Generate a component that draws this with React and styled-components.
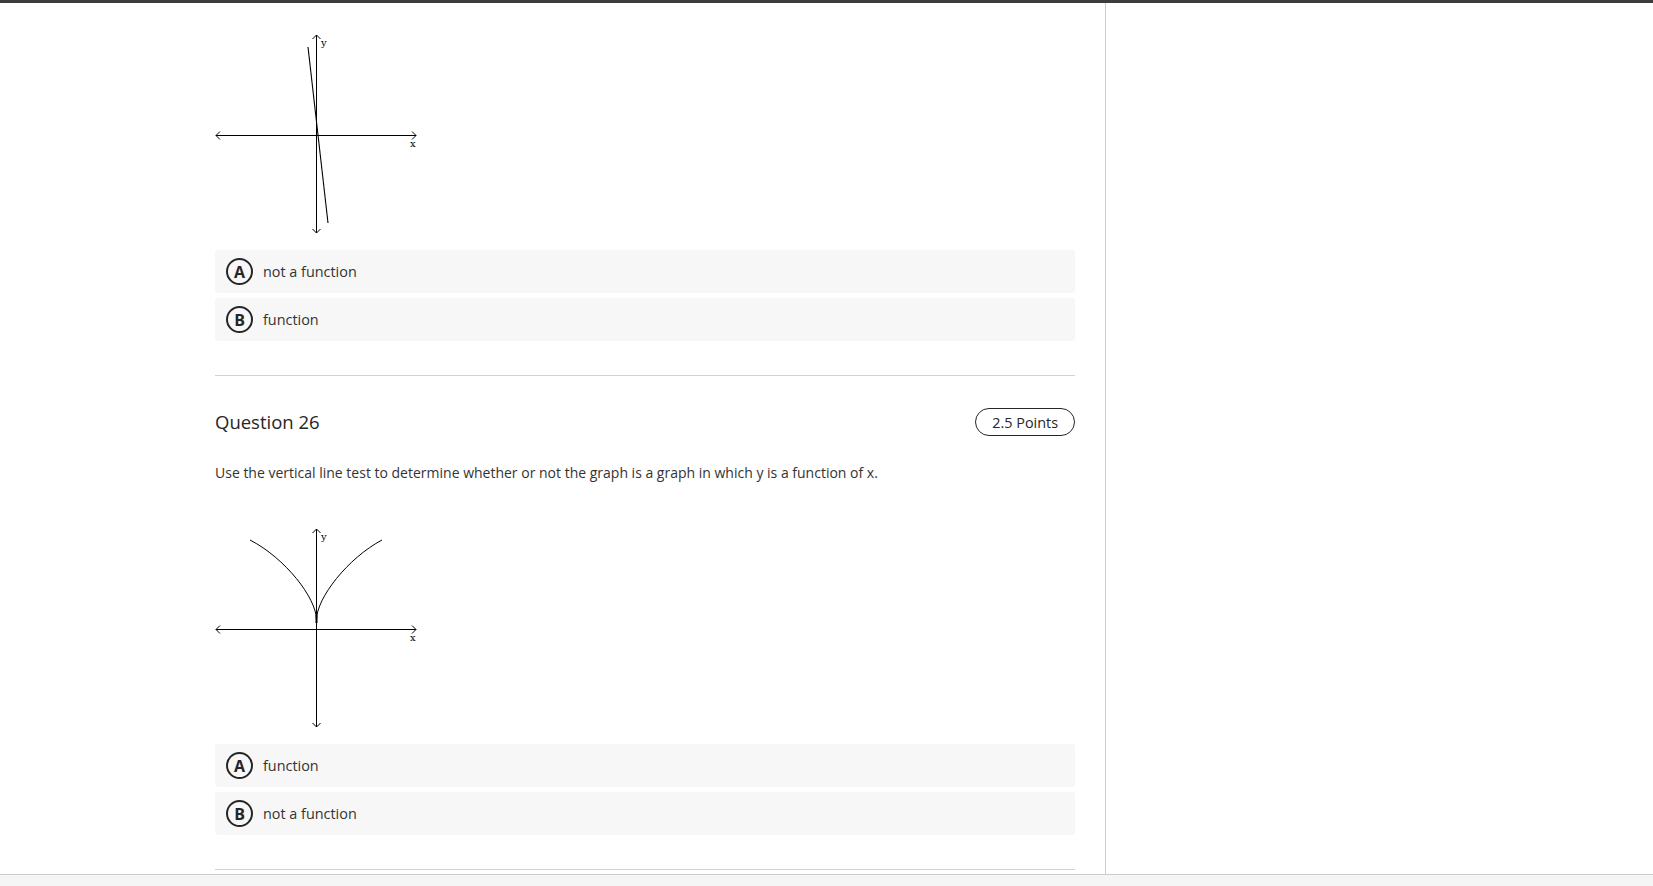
import styled, { createGlobalStyle } from "styled-components";

const GlobalStyle = createGlobalStyle`
  html, body {
    margin: 0;
    padding: 0;
    background: #ffffff;
    overflow: hidden;
  }
  body {
    font-family: "Open Sans", "Noto Sans", Arial, sans-serif;
    color: #333333;
  }
`;

const questions = [
  {
    id: 25,
    partial: true,
    graph: "line",
    options: [
      { key: "A", label: "not a function" },
      { key: "B", label: "function" },
    ],
  },
  {
    id: 26,
    points: "2.5 Points",
    text: "Use the vertical line test to determine whether or not the graph is a graph in which y is a function of x.",
    graph: "cusp",
    options: [
      { key: "A", label: "function" },
      { key: "B", label: "not a function" },
    ],
  },
];

const Axes = () => (
  <g stroke="#000" strokeWidth="1" fill="none">
    <line x1="1" y1="101.5" x2="201" y2="101.5" />
    <polyline points="5,97.5 1,101.5 5,105.5" />
    <polyline points="197,97.5 201,101.5 197,105.5" />
    <line x1="101.5" y1="1" x2="101.5" y2="199" />
    <polyline points="97.5,5 101.5,1 105.5,5" />
    <polyline points="97.5,195 101.5,199 105.5,195" />
  </g>
);

const Labels = () => (
  <g fontFamily="'DejaVu Serif', 'Liberation Serif', serif" fontSize="10" fill="#000">
    <text x="106" y="12">y</text>
    <text x="195" y="113">x</text>
  </g>
);

const Graph = ({ kind }) => (
  <GraphSvg width="210" height="202" viewBox="0 0 210 202">
    <Axes />
    <Labels />
    {kind === "line" ? (
      <line x1="93" y1="13" x2="113" y2="189" stroke="#000" strokeWidth="1.1" />
    ) : (
      <g stroke="#000" strokeWidth="1" fill="none">
        <path d="M101.5,92 C101.5,70 70,30 35,12" />
        <path d="M101.5,92 C101.5,70 133,30 167,12" />
        <rect x="100.5" y="87" width="2" height="8" fill="#000" stroke="none" />
      </g>
    )}
  </GraphSvg>
);

const Option = ({ letter, label }) => (
  <StyledOption>
    <StyledLetter>{letter}</StyledLetter>
    <StyledOptionLabel>{label}</StyledOptionLabel>
  </StyledOption>
);

const Question = ({ q }) => (
  <StyledQuestion $partial={q.partial}>
    {!q.partial && (
      <>
        <StyledHeader>
          <StyledTitle>Question {q.id}</StyledTitle>
          <StyledPoints>{q.points}</StyledPoints>
        </StyledHeader>
        <StyledText>{q.text}</StyledText>
      </>
    )}
    <Graph kind={q.graph} />
    <StyledOptions>
      {q.options.map(({ key, label }) => (
        <Option key={key} letter={key} label={label} />
      ))}
    </StyledOptions>
  </StyledQuestion>
);

export default function App() {
  return (
    <>
      <GlobalStyle />
      <StyledPage>
        <StyledTopBar />
        <StyledMain>
          <StyledLeft>
            <StyledContent>
              {questions.map((q) => (
                <Question key={q.id} q={q} />
              ))}
            </StyledContent>
          </StyledLeft>
          <StyledRight />
        </StyledMain>
        <StyledBottomBar />
      </StyledPage>
    </>
  );
}

const StyledPage = styled.div`
  width: 100vw;
  height: 886px;
  display: flex;
  flex-direction: column;
`;

const StyledTopBar = styled.div`
  height: 3px;
  flex-shrink: 0;
  background: #3b3c3e;
`;

const StyledMain = styled.div`
  flex: 1;
  display: flex;
  min-height: 0;
`;

const StyledLeft = styled.div`
  width: 1105px;
  flex-shrink: 0;
  border-right: 1px solid #cccccc;
  overflow: hidden;
`;

const StyledRight = styled.div`
  flex: 1;
`;

const StyledBottomBar = styled.div`
  height: 11px;
  flex-shrink: 0;
  border-top: 1px solid #cccccc;
  background: #f5f5f5;
`;

const StyledContent = styled.div`
  margin-left: 215px;
  width: 860px;
  padding-top: 31px;
`;

const StyledQuestion = styled.section`
  padding-top: ${(p) => (p.$partial ? "0" : "32px")};
  padding-bottom: 34px;
  border-bottom: 1px solid #d2d2d2;
`;

const StyledHeader = styled.div`
  display: flex;
  align-items: center;
  justify-content: space-between;
  height: 28px;
`;

const StyledTitle = styled.h2`
  margin: 0;
  font-size: 18.5px;
  font-weight: 400;
  color: #262626;
  line-height: 28px;
`;

const StyledPoints = styled.span`
  box-sizing: border-box;
  height: 28px;
  padding: 0 16px;
  display: flex;
  align-items: center;
  border: 1px solid #262626;
  border-radius: 14px;
  font-size: 14.4px;
  color: #262626;
`;

const StyledText = styled.p`
  margin: 27px 0 45px;
  font-size: 14px;
  line-height: 20px;
  color: #333333;
`;

const GraphSvg = styled.svg`
  display: block;
  shape-rendering: geometricPrecision;
`;

const StyledOptions = styled.div`
  margin-top: 14px;
  display: flex;
  flex-direction: column;
  gap: 5px;
`;

const StyledOption = styled.div`
  height: 43px;
  box-sizing: border-box;
  padding-left: 11px;
  display: flex;
  align-items: center;
  gap: 10px;
  background: #f7f7f7;
  border-radius: 3px;
`;

const StyledLetter = styled.span`
  box-sizing: border-box;
  width: 27px;
  height: 27px;
  border: 2px solid #262626;
  border-radius: 50%;
  display: flex;
  align-items: center;
  justify-content: center;
  font-size: 16px;
  line-height: 1;
  font-weight: 700;
  color: #262626;
`;

const StyledOptionLabel = styled.span`
  font-size: 14.4px;
  color: #333333;
`;
